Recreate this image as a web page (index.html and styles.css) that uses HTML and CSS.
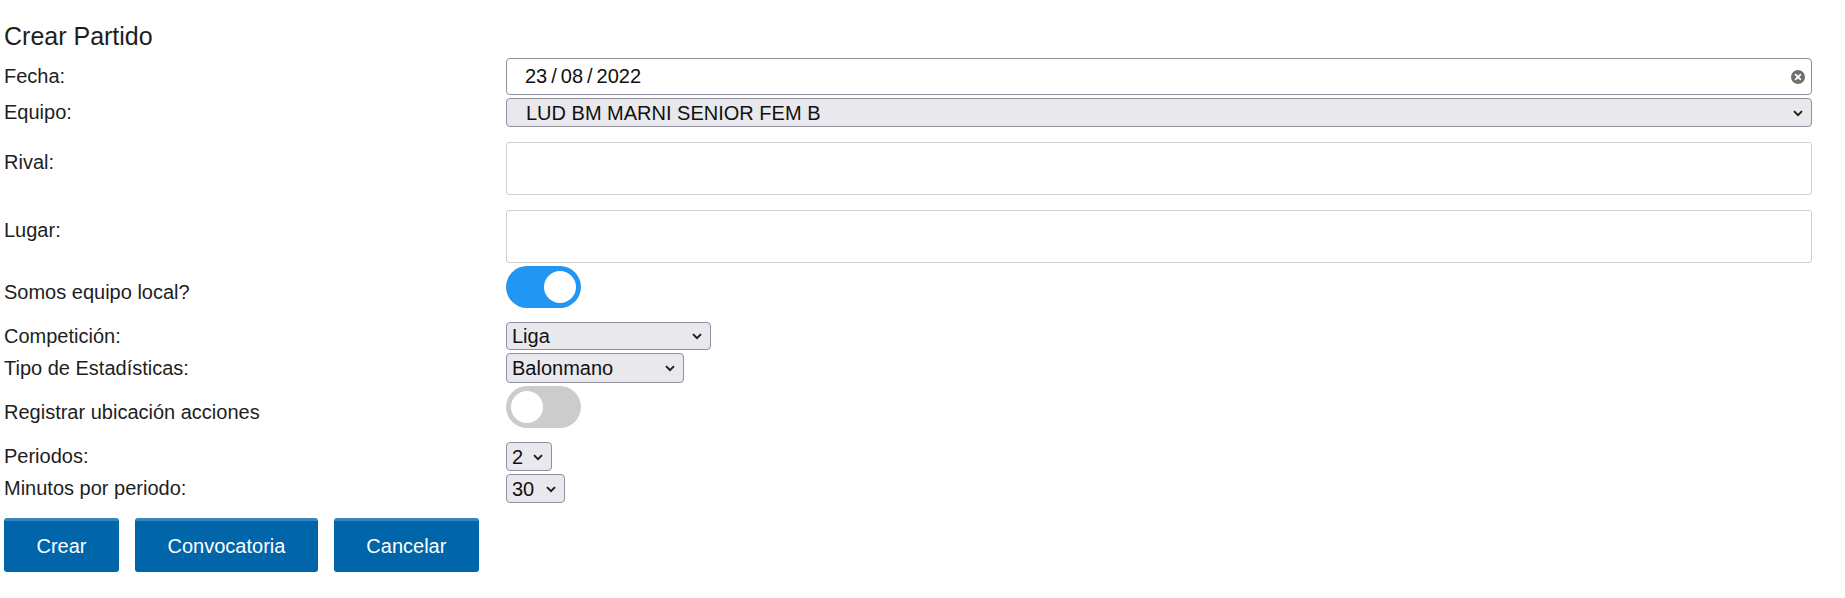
FILE: index.html
```html
<!DOCTYPE html>
<html lang="es">
<head>
<meta charset="utf-8">
<title>Crear Partido</title>
<link rel="stylesheet" href="styles.css">
</head>
<body>
<main class="page">
  <h1 class="title">Crear Partido</h1>
  <form class="form">
    <label class="lbl" for="fecha">Fecha:</label>
    <div class="field field-date">
      <input id="fecha" class="date-input" type="text" value="23&#8201;/&#8201;08&#8201;/&#8201;2022">
      <svg class="clear-icon" width="14" height="14" viewBox="0 0 14 14" aria-hidden="true">
        <circle cx="7" cy="7" r="7" fill="#6f6f6f"/>
        <path d="M4.6 4.6 L9.4 9.4 M9.4 4.6 L4.6 9.4" stroke="#fff" stroke-width="1.8" stroke-linecap="round"/>
      </svg>
    </div>

    <label class="lbl" for="equipo">Equipo:</label>
    <div class="field">
      <span class="select-wrap select-full">
        <select id="equipo" class="sel sel-equipo"><option>LUD BM MARNI SENIOR FEM B</option></select>
        <svg class="chev" width="10" height="7" viewBox="0 0 10 7" aria-hidden="true"><path d="M1 1.2 L5 5.2 L9 1.2" fill="none" stroke="#1b1b1b" stroke-width="1.9"/></svg>
      </span>
    </div>

    <label class="lbl" for="rival">Rival:</label>
    <div class="field"><input id="rival" class="text-input" type="text"></div>

    <label class="lbl" for="lugar">Lugar:</label>
    <div class="field"><input id="lugar" class="text-input" type="text"></div>

    <span class="lbl">Somos equipo local?</span>
    <div class="field field-toggle">
      <label class="switch on"><input type="checkbox" checked><span class="knob"></span></label>
    </div>

    <label class="lbl" for="comp">Competición:</label>
    <div class="field">
      <span class="select-wrap">
        <select id="comp" class="sel sel-comp"><option>Liga</option></select>
        <svg class="chev" width="10" height="7" viewBox="0 0 10 7" aria-hidden="true"><path d="M1 1.2 L5 5.2 L9 1.2" fill="none" stroke="#1b1b1b" stroke-width="1.9"/></svg>
      </span>
    </div>

    <label class="lbl" for="tipo">Tipo de Estadísticas:</label>
    <div class="field">
      <span class="select-wrap">
        <select id="tipo" class="sel sel-tipo"><option>Balonmano</option></select>
        <svg class="chev" width="10" height="7" viewBox="0 0 10 7" aria-hidden="true"><path d="M1 1.2 L5 5.2 L9 1.2" fill="none" stroke="#1b1b1b" stroke-width="1.9"/></svg>
      </span>
    </div>

    <span class="lbl">Registrar ubicación acciones</span>
    <div class="field field-toggle">
      <label class="switch"><input type="checkbox"><span class="knob"></span></label>
    </div>

    <label class="lbl" for="periodos">Periodos:</label>
    <div class="field">
      <span class="select-wrap">
        <select id="periodos" class="sel sel-periodos"><option>2</option></select>
        <svg class="chev" width="10" height="7" viewBox="0 0 10 7" aria-hidden="true"><path d="M1 1.2 L5 5.2 L9 1.2" fill="none" stroke="#1b1b1b" stroke-width="1.9"/></svg>
      </span>
    </div>

    <label class="lbl" for="minutos">Minutos por periodo:</label>
    <div class="field">
      <span class="select-wrap">
        <select id="minutos" class="sel sel-minutos"><option>30</option></select>
        <svg class="chev" width="10" height="7" viewBox="0 0 10 7" aria-hidden="true"><path d="M1 1.2 L5 5.2 L9 1.2" fill="none" stroke="#1b1b1b" stroke-width="1.9"/></svg>
      </span>
    </div>
  </form>

  <div class="actions">
    <button class="btn" type="button">Crear</button>
    <button class="btn" type="button">Convocatoria</button>
    <button class="btn" type="button">Cancelar</button>
  </div>
</main>
</body>
</html>
```

FILE: styles.css
```css
html, body {
  margin: 0;
  padding: 0;
  background: #fff;
}

body {
  font-family: "Liberation Sans", Arial, sans-serif;
  font-size: 20px;
  color: #1e1e1e;
}

.page {
  padding: 0 33px 0 4px;
}

.title {
  margin: 22px 0 8px;
  font-size: 25px;
  font-weight: normal;
  line-height: 28px;
  color: #1e1e1e;
}

.form {
  display: grid;
  grid-template-columns: 502px 1fr;
  row-gap: 3px;
}

.lbl {
  align-self: center;
  font-size: 20px;
  line-height: 23px;
  color: #1e1e1e;
}

.field {
  display: flex;
  align-items: center;
}

.field-date {
  position: relative;
}

.date-input {
  box-sizing: border-box;
  width: 100%;
  height: 37px;
  margin: 0;
  padding: 0 40px 0 18px;
  border: 1px solid #8f8f9d;
  border-radius: 4px;
  background: #fff;
  font-family: inherit;
  font-size: 20px;
  color: #111;
  outline: none;
}

.clear-icon {
  position: absolute;
  right: 7px;
  top: 12px;
}

.select-wrap {
  position: relative;
  display: inline-block;
}

.select-full {
  width: 100%;
}

.sel {
  -webkit-appearance: none;
  appearance: none;
  box-sizing: border-box;
  height: 29px;
  margin: 0;
  padding: 0 24px 0 5px;
  border: 1px solid #8f8f9d;
  border-radius: 4px;
  background: #e9e9ed;
  font-family: inherit;
  font-size: 20px;
  color: #111;
  outline: none;
}

.sel-equipo {
  width: 100%;
  padding-left: 19px;
}

.sel-comp { width: 205px; height: 28px; }
.sel-tipo { width: 178px; height: 30px; }
.sel-periodos { width: 46px; }
.sel-minutos { width: 59px; }

.chev {
  position: absolute;
  right: 9px;
  top: 50%;
  margin-top: -3px;
  pointer-events: none;
}

.text-input {
  box-sizing: border-box;
  width: 100%;
  height: 53px;
  margin: 12px 0 0;
  padding: 0 10px;
  border: 1px solid #cfcfcf;
  border-radius: 3px;
  background: #fff;
  font-family: inherit;
  font-size: 20px;
  outline: none;
}

.field-toggle {
  height: 53px;
  align-items: flex-start;
}

.switch {
  position: relative;
  display: inline-block;
  width: 75px;
  height: 42px;
  border-radius: 21px;
  background: #ccc;
}

.switch input {
  position: absolute;
  opacity: 0;
  width: 0;
  height: 0;
  margin: 0;
}

.switch.on {
  background: #2196f3;
}

.knob {
  position: absolute;
  left: 5px;
  top: 5px;
  width: 32px;
  height: 32px;
  border-radius: 50%;
  background: #fff;
}

.switch.on .knob {
  left: 38px;
}

.actions {
  display: flex;
  gap: 16px;
  margin-top: 15px;
}

.btn {
  box-sizing: border-box;
  height: 54px;
  margin: 0;
  padding: 0 32.5px;
  border: none;
  border-top: 3px solid #3586c0;
  border-radius: 3px;
  background: #0066a9;
  color: #fff;
  font-family: inherit;
  font-size: 20px;
  cursor: pointer;
}
```
